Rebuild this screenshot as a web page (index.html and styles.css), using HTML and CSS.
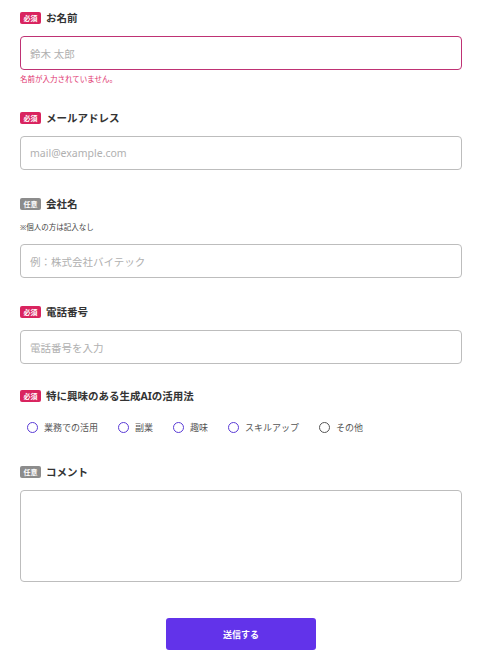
FILE: index.html
```html
<!DOCTYPE html>
<html lang="ja">
<head>
<meta charset="utf-8">
<title>フォーム</title>
<link rel="stylesheet" href="styles.css">
</head>
<body>
<form class="form">
  <div class="field">
    <div class="label-row"><span class="badge req">必須</span><span class="label">お名前</span></div>
    <div class="input error">鈴木 太郎</div>
    <p class="error-msg">名前が入力されていません。</p>
  </div>

  <div class="field">
    <div class="label-row"><span class="badge req">必須</span><span class="label">メールアドレス</span></div>
    <div class="input">mail@example.com</div>
  </div>

  <div class="field">
    <div class="label-row"><span class="badge opt">任意</span><span class="label">会社名</span></div>
    <p class="note">※個人の方は記入なし</p>
    <div class="input">例：株式会社バイテック</div>
  </div>

  <div class="field field-tight">
    <div class="label-row"><span class="badge req">必須</span><span class="label">電話番号</span></div>
    <div class="input">電話番号を入力</div>
  </div>

  <div class="field field-tight">
    <div class="label-row"><span class="badge req">必須</span><span class="label">特に興味のある生成AIの活用法</span></div>
    <div class="radios">
      <label class="radio"><span class="dot"></span>業務での活用</label>
      <label class="radio"><span class="dot"></span>副業</label>
      <label class="radio"><span class="dot"></span>趣味</label>
      <label class="radio"><span class="dot"></span>スキルアップ</label>
      <label class="radio"><span class="dot gray"></span>その他</label>
    </div>
  </div>

  <div class="field field-last">
    <div class="label-row"><span class="badge opt">任意</span><span class="label">コメント</span></div>
    <div class="textarea"></div>
  </div>

  <div class="submit-row"><button type="button" class="submit">送信する</button></div>
</form>
</body>
</html>
```

FILE: styles.css
```css
* { box-sizing: border-box; }
html, body { margin: 0; padding: 0; background: #fff; }
body {
  font-family: "Noto Sans", "Noto Sans CJK JP", sans-serif;
  color: #333;
}
.form {
  padding: 12px 18px 0 20px;
  display: flex;
  flex-direction: column;
}
.field { margin-bottom: 28px; }
.field-tight { margin-bottom: 26px; }
.field-last { margin-bottom: 36px; }
.label-row {
  display: flex;
  align-items: center;
  gap: 5px;
  height: 12px;
  margin-bottom: 12px;
}
.badge {
  display: inline-flex;
  align-items: center;
  justify-content: center;
  width: 21px;
  height: 12px;
  border-radius: 2px;
  color: #fff;
  font-size: 7px;
  font-weight: 700;
  line-height: 1;
}
.badge.req { background: #d9245f; }
.badge.opt { background: #8c8c8c; }
.label {
  font-size: 10.5px;
  font-weight: 700;
  color: #333;
  line-height: 1;
}
.input {
  height: 34px;
  border: 1px solid #bdbdbd;
  border-radius: 4px;
  padding: 0 9px;
  display: flex;
  align-items: center;
  font-size: 10.5px;
  color: #b0b0b0;
}
.input.error { border-color: #bf3274; }
.error-msg {
  margin: 4px 0 0;
  font-size: 7.5px;
  line-height: 10px;
  color: #e0316d;
}
.note {
  margin: 0 0 12px;
  font-size: 7.5px;
  line-height: 10px;
  color: #444;
}
.radios {
  display: flex;
  align-items: center;
  height: 26px;
  padding-left: 7px;
  gap: 20px;
}
.radio {
  display: flex;
  align-items: center;
  gap: 6px;
  font-size: 9px;
  color: #555;
}
.dot {
  width: 11px;
  height: 11px;
  border-radius: 50%;
  border: 1.5px solid #5a3bd6;
}
.dot.gray { border-color: #555; }
.textarea {
  height: 92px;
  border: 1px solid #bdbdbd;
  border-radius: 4px;
}
.submit-row { display: flex; justify-content: center; }
.submit {
  width: 150px;
  height: 32px;
  border: none;
  border-radius: 3px;
  background: #6233ea;
  color: #fff;
  font-family: "Noto Sans", "Noto Sans CJK JP", sans-serif;
  font-size: 9px;
  font-weight: 700;
}
```
